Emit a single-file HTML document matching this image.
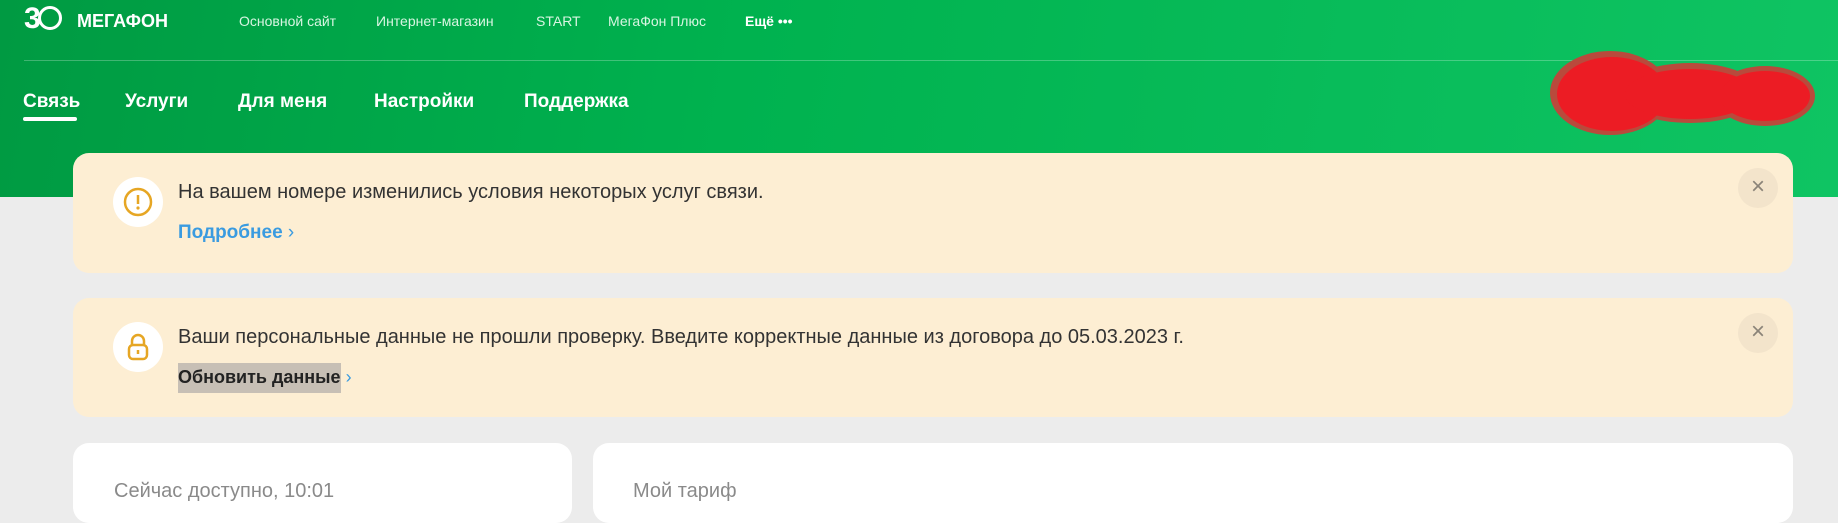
<!DOCTYPE html>
<html><head><meta charset="utf-8"><style>
*{margin:0;padding:0;box-sizing:border-box}
body{width:1838px;height:515px;overflow:hidden;background:#ececec;font-family:"Liberation Sans",sans-serif;position:relative}
.hdr{position:absolute;left:0;top:0;width:1838px;height:197px;background:linear-gradient(100deg,#009a42 0%,#00b24f 40%,#0fc463 100%)}
.line{position:absolute;left:24px;right:0;top:60px;height:1px;background:rgba(255,255,255,.25)}
.tn{position:absolute;top:13px;font-size:14px;color:#d8f5e2}
.mn{position:absolute;top:91px;font-size:19px;font-weight:bold;color:#fff}
.ul{position:absolute;left:23px;top:117px;width:54px;height:4px;background:#fff;border-radius:2px}
.card{position:absolute;left:73px;width:1720px;border-radius:16px;background:#fdeed3}
.ic{position:absolute;left:113px;width:50px;height:50px;border-radius:50%;background:#fff}
.t{position:absolute;left:178px;font-size:20px;color:#333}
.x{position:absolute;left:1738px;width:40px;height:40px;border-radius:50%;background:#f3e4cb;color:#8a8378;font-size:24px;text-align:center;line-height:38px}
.w{position:absolute;top:443px;height:80px;background:#fff;border-radius:16px}
.g{position:absolute;top:480px;font-size:20px;color:#8a8a8a}
</style></head><body>
<div class="hdr">
 <div style="position:absolute;left:24px;top:2px;color:#fff;font-size:30px;font-weight:bold;letter-spacing:-3px">3<span style="display:inline-block;width:24px;height:24px;border:3px solid #fff;border-radius:50%;vertical-align:-2px"></span></div>
 <div style="position:absolute;left:77px;top:11px;color:#fff;font-size:18px;font-weight:bold">МЕГАФОН</div>
 <div class="tn" style="left:239px">Основной сайт</div>
 <div class="tn" style="left:376px">Интернет-магазин</div>
 <div class="tn" style="left:536px">START</div>
 <div class="tn" style="left:608px">МегаФон Плюс</div>
 <div class="tn" style="left:745px;color:#fff;font-weight:bold">Ещё •••</div>
 <div class="line"></div>
 <div class="mn" style="left:23px">Связь</div>
 <div class="mn" style="left:125px">Услуги</div>
 <div class="mn" style="left:238px">Для меня</div>
 <div class="mn" style="left:374px">Настройки</div>
 <div class="mn" style="left:524px">Поддержка</div>
 <div class="ul"></div>
 <svg style="position:absolute;left:1540px;top:48px" width="285" height="105"><g fill="#b94a3c"><ellipse cx="70" cy="45" rx="60" ry="42"/><ellipse cx="150" cy="45" rx="70" ry="30"/><ellipse cx="225" cy="48" rx="50" ry="30"/></g><g fill="#ec1c24"><ellipse cx="72" cy="46" rx="55" ry="37"/><ellipse cx="150" cy="46" rx="65" ry="25"/><ellipse cx="225" cy="48" rx="45" ry="25"/></g></svg>
</div>
<div class="card" style="top:153px;height:120px"></div>
<div class="ic" style="top:177px"><svg width="50" height="50"><circle cx="25" cy="25" r="13" fill="none" stroke="#e6a624" stroke-width="2.5"/><line x1="25" y1="18" x2="25" y2="27" stroke="#e6a624" stroke-width="2.5"/><circle cx="25" cy="31" r="1.6" fill="#e6a624"/></svg></div>
<div class="t" style="top:181px">На вашем номере изменились условия некоторых услуг связи.</div>
<div class="t" style="top:222px;color:#3a9be0;font-weight:bold;font-size:19px">Подробнее <span style="font-weight:normal">›</span></div>
<div class="x" style="top:168px">×</div>
<div class="card" style="top:298px;height:119px"></div>
<div class="ic" style="top:322px"><svg width="50" height="50"><path d="M19 23v-4a6 6 0 0 1 12 0v4" fill="none" stroke="#e6a624" stroke-width="2.5"/><rect x="16" y="23" width="18" height="14" rx="4" fill="none" stroke="#e6a624" stroke-width="2.5"/><line x1="25" y1="28" x2="25" y2="32" stroke="#e6a624" stroke-width="2.5"/></svg></div>
<div class="t" style="top:326px">Ваши персональные данные не прошли проверку. Введите корректные данные из договора до 05.03.2023 г.</div>
<div style="position:absolute;left:178px;top:363px;width:163px;height:30px;background:#c7bfb5"></div>
<div class="t" style="top:367px;color:#222;font-weight:bold;font-size:18px">Обновить данные <span style="font-weight:normal;color:#3a9be0">›</span></div>
<div class="x" style="top:313px">×</div>
<div class="w" style="left:73px;width:499px"></div>
<div class="w" style="left:593px;width:1200px"></div>
<div class="g" style="left:114px">Сейчас доступно, 10:01</div>
<div class="g" style="left:633px">Мой тариф</div>
</body></html>
